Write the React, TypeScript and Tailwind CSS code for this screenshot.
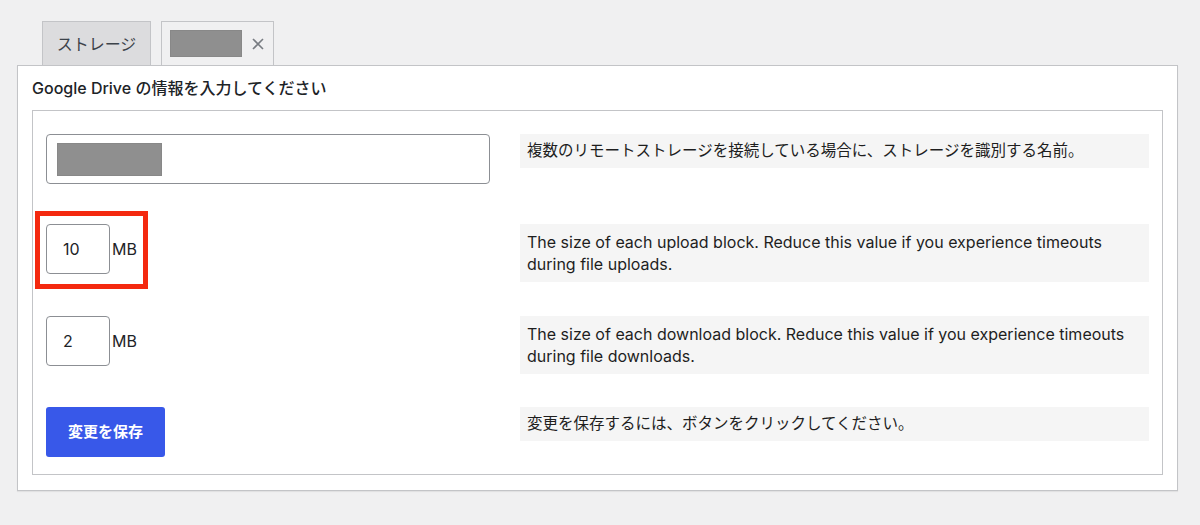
import React from "react";

const FONT = "font-['Inter','Noto_Sans_CJK_JP',sans-serif]";

type Row = {
  field: React.ReactNode;
  note: React.ReactNode;
  gap: string;
};

function SizeInput({ value }: { value: string }) {
  return (
    <div className="flex items-center gap-[2px]">
      <div className="flex h-[50px] w-[64px] items-center rounded-[4px] border border-[#8c8f94] bg-white pl-[16px] text-[16px] text-[#1d2327]">
        {value}
      </div>
      <span className="text-[16px] text-[#1d2327]">MB</span>
    </div>
  );
}

function Note({ children, jp }: { children: React.ReactNode; jp?: boolean }) {
  return (
    <div
      className={
        jp
          ? "bg-[#f5f5f5] px-[7px] py-[6px] text-[15.5px] leading-[22px] text-[#1e1e1e]"
          : "bg-[#f5f5f5] px-[7px] py-[7px] text-[16px] leading-[22px] text-[#1e1e1e]"
      }
    >
      {children}
    </div>
  );
}

export default function App() {
  const rows: Row[] = [
    {
      field: (
        <div className="flex h-[50px] w-[444px] items-center rounded-[4px] border border-[#8c8f94] bg-white px-[10px]">
          <span className="h-[33px] w-[105px] border border-[#888] bg-[#8f8f8f]" />
        </div>
      ),
      note: <Note jp>複数のリモートストレージを接続している場合に、ストレージを識別する名前。</Note>,
      gap: "mb-[40px]",
    },
    {
      field: (
        <div className="relative w-fit">
          {/* annotation highlight */}
          <span className="pointer-events-none absolute left-[-11px] top-[-13px] h-[78px] w-[113px] border-[5px] border-[#f4290f]" />
          <SizeInput value="10" />
        </div>
      ),
      note: (
        <Note>
          The size of each upload block. Reduce this value if you experience timeouts during file uploads.
        </Note>
      ),
      gap: "mb-[34px]",
    },
    {
      field: <SizeInput value="2" />,
      note: (
        <Note>
          The size of each download block. Reduce this value if you experience timeouts during file downloads.
        </Note>
      ),
      gap: "mb-[33px]",
    },
    {
      field: (
        <button className="h-[50px] w-[119px] rounded-[3px] bg-[#3858e9] text-[15px] font-bold text-white">
          変更を保存
        </button>
      ),
      note: <Note jp>変更を保存するには、ボタンをクリックしてください。</Note>,
      gap: "",
    },
  ];

  return (
    <div className={`${FONT} min-h-[525px] w-[1200px] bg-[#f0f0f1] pl-[17px] pr-[22px] pt-[21px]`}>
      {/* tabs */}
      <div className="flex gap-[10px] pl-[25px]">
        <div className="flex h-[44px] w-[109px] items-center justify-center border border-b-0 border-[#c3c4c7] bg-[#dcdcde] text-[16px] text-[#3c434a]">
          ストレージ
        </div>
        <div className="flex h-[44px] w-[113px] items-center gap-[10px] border border-b-0 border-[#c3c4c7] bg-[#f0f0f1] pl-[8px]">
          <span className="h-[27px] w-[72px] border border-[#888] bg-[#8f8f8f]" />
          <svg width="12" height="12" viewBox="0 0 12 12" className="text-[#787c82]">
            <path d="M1 1L11 11M11 1L1 11" stroke="currentColor" strokeWidth="1.6" />
          </svg>
        </div>
      </div>

      {/* panel */}
      <div className="border border-[#c3c4c7] bg-white px-[14px] pb-[15px] shadow-[0_1px_1px_rgba(0,0,0,0.06)]">
        <div className="flex h-[44px] items-center text-[16px] font-medium text-[#1d2327]">
          Google Drive の情報を入力してください
        </div>
        <div className="border border-[#c3c4c7] pb-[17px] pl-[13px] pr-[13px] pt-[23px]">
          {rows.map((r, i) => (
            <div key={i} className={`grid grid-cols-[474px_1fr] items-start ${r.gap}`}>
              <div>{r.field}</div>
              {r.note}
            </div>
          ))}
        </div>
      </div>
    </div>
  );
}
